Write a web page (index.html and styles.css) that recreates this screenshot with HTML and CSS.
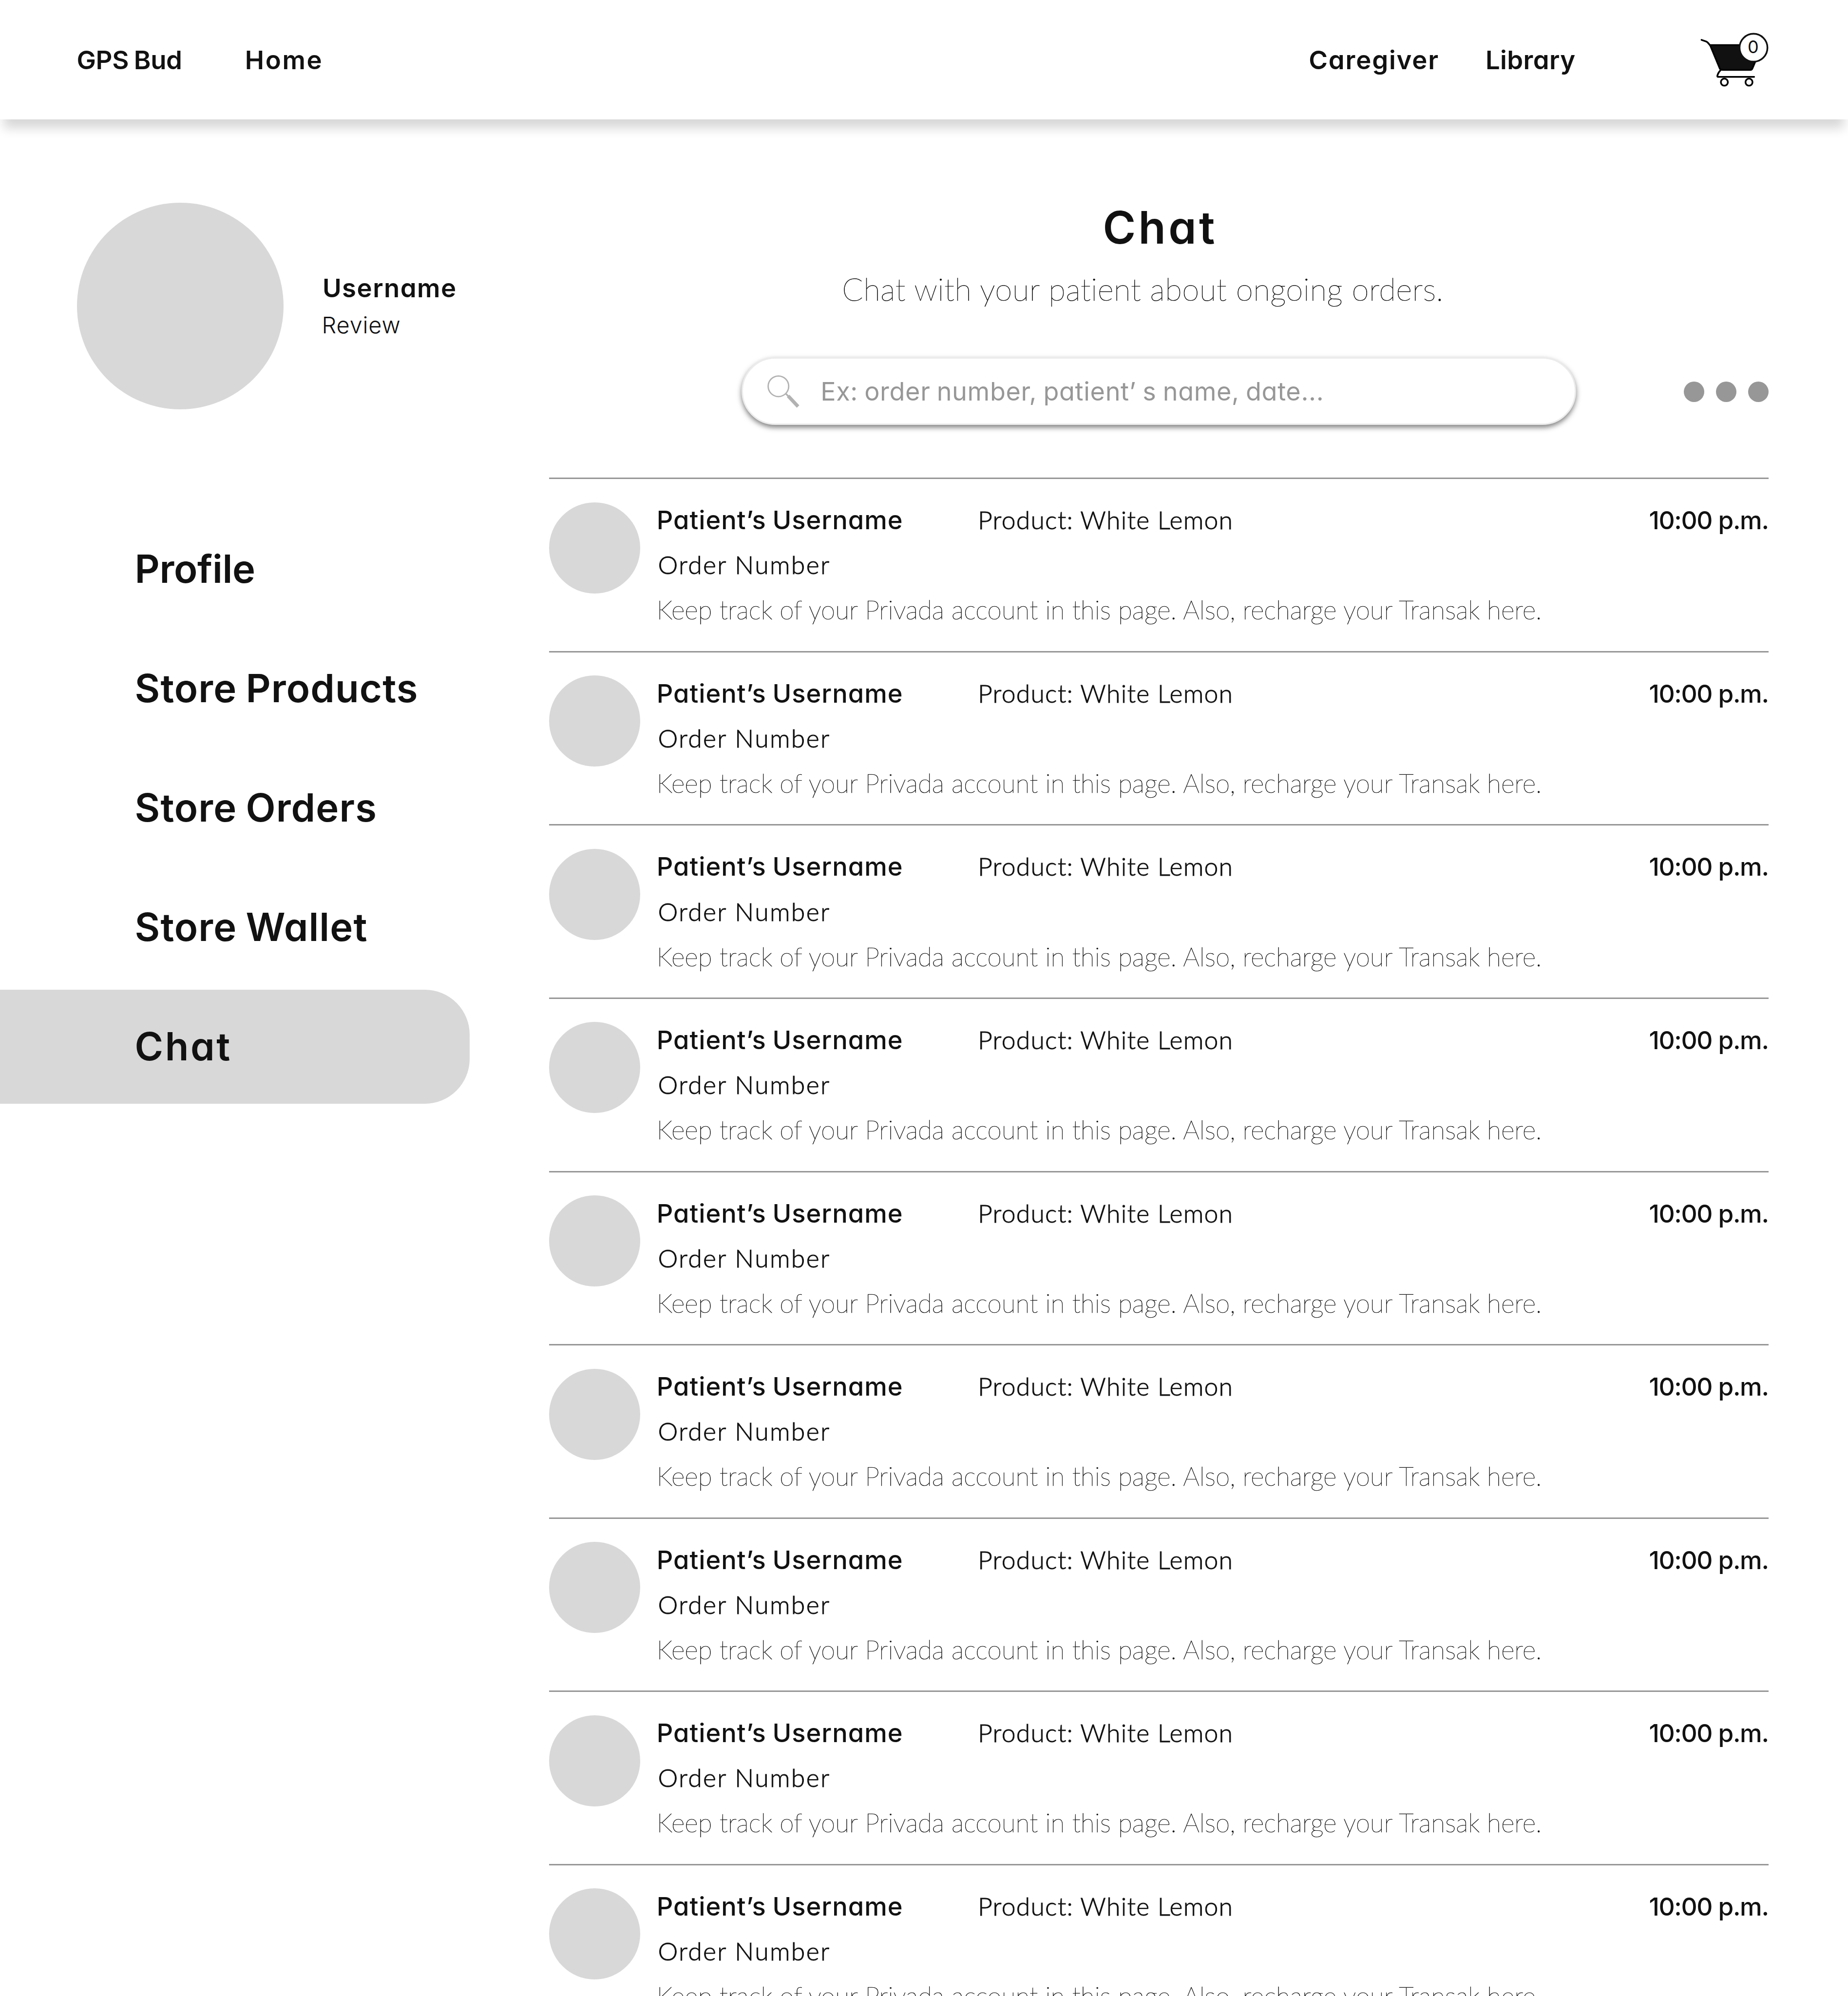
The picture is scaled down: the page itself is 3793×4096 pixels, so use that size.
FILE: index.html
```html
<!DOCTYPE html>
<html lang="en">
<head>
<meta charset="utf-8">
<title>GPS Bud – Chat</title>
<link rel="stylesheet" href="styles.css">
</head>
<body>
<header class="topbar">
  <a class="topbar-link brand">GPS Bud</a>
  <a class="topbar-link home">Home</a>
  <a class="topbar-link caregiver">Caregiver</a>
  <a class="topbar-link library">Library</a>
  <svg class="cart" viewBox="0 0 240 180" aria-label="Cart">
    <g fill="none" stroke="#000" stroke-width="4" stroke-linecap="round" stroke-linejoin="round">
      <path fill="#111" d="M58 56.5H180L156.8 111.5Q155.6 114.4 152.4 114.4H88Q82.5 114.4 80.8 111.5Z"/>
      <path d="M38 44.2L49.5 48.3Q52 49.4 58 57"/>
      <path d="M82.8 114.8Q76.4 121.5 75 128.2Q74.6 130.6 76.8 130.6H161"/>
      <circle cx="91.4" cy="143" r="8.2"/>
      <circle cx="149" cy="143" r="8.2"/>
    </g>
    <circle cx="159.5" cy="62.6" r="32.6" fill="#fff" stroke="#111" stroke-width="4"/>
    <text class="cart-count" x="158.7" y="75" text-anchor="middle">0</text>
  </svg>
</header>
<div class="page">
  <aside class="sidebar">
    <section class="user">
      <div class="user-avatar"></div>
      <div class="user-text">
        <div class="user-name">Username</div>
        <div class="user-review">Review</div>
      </div>
    </section>
    <nav class="menu">
      <a class="menu-item tight">Profile</a>
      <a class="menu-item">Store Products</a>
      <a class="menu-item">Store Orders</a>
      <a class="menu-item">Store Wallet</a>
      <a class="menu-item active">Chat</a>
    </nav>
  </aside>
  <main class="main">
    <h1 class="title">Chat</h1>
    <p class="subtitle">Chat with your patient about ongoing orders.</p>
    <div class="tools">
      <div class="search">
        <svg class="search-icon" viewBox="0 0 80 80" fill="none" stroke="#b2b2b2">
          <circle cx="29.3" cy="29.3" r="24" stroke-width="3.2"/>
          <path stroke-width="4" d="M46.3 46.3L53 53"/>
          <path stroke-width="8" d="M52 51.8L75.2 76.6"/>
        </svg>
        <span class="search-hint">Ex: order number, patient’ s name, date...</span>
      </div>
      <div class="dots"><i></i><i></i><i></i></div>
    </div>
    <div class="list">
      <article class="chat"><div class="chat-avatar"></div><div class="chat-body"><div class="chat-head"><span class="chat-name">Patient’s Username</span><span class="chat-product">Product: White Lemon</span><span class="chat-time">10:00 p.m.</span></div><div class="chat-order">Order Number</div><div class="chat-text">Keep track of your Privada account in this page. Also, recharge your Transak here.</div></div></article>
      <article class="chat"><div class="chat-avatar"></div><div class="chat-body"><div class="chat-head"><span class="chat-name">Patient’s Username</span><span class="chat-product">Product: White Lemon</span><span class="chat-time">10:00 p.m.</span></div><div class="chat-order">Order Number</div><div class="chat-text">Keep track of your Privada account in this page. Also, recharge your Transak here.</div></div></article>
      <article class="chat"><div class="chat-avatar"></div><div class="chat-body"><div class="chat-head"><span class="chat-name">Patient’s Username</span><span class="chat-product">Product: White Lemon</span><span class="chat-time">10:00 p.m.</span></div><div class="chat-order">Order Number</div><div class="chat-text">Keep track of your Privada account in this page. Also, recharge your Transak here.</div></div></article>
      <article class="chat"><div class="chat-avatar"></div><div class="chat-body"><div class="chat-head"><span class="chat-name">Patient’s Username</span><span class="chat-product">Product: White Lemon</span><span class="chat-time">10:00 p.m.</span></div><div class="chat-order">Order Number</div><div class="chat-text">Keep track of your Privada account in this page. Also, recharge your Transak here.</div></div></article>
      <article class="chat"><div class="chat-avatar"></div><div class="chat-body"><div class="chat-head"><span class="chat-name">Patient’s Username</span><span class="chat-product">Product: White Lemon</span><span class="chat-time">10:00 p.m.</span></div><div class="chat-order">Order Number</div><div class="chat-text">Keep track of your Privada account in this page. Also, recharge your Transak here.</div></div></article>
      <article class="chat"><div class="chat-avatar"></div><div class="chat-body"><div class="chat-head"><span class="chat-name">Patient’s Username</span><span class="chat-product">Product: White Lemon</span><span class="chat-time">10:00 p.m.</span></div><div class="chat-order">Order Number</div><div class="chat-text">Keep track of your Privada account in this page. Also, recharge your Transak here.</div></div></article>
      <article class="chat"><div class="chat-avatar"></div><div class="chat-body"><div class="chat-head"><span class="chat-name">Patient’s Username</span><span class="chat-product">Product: White Lemon</span><span class="chat-time">10:00 p.m.</span></div><div class="chat-order">Order Number</div><div class="chat-text">Keep track of your Privada account in this page. Also, recharge your Transak here.</div></div></article>
      <article class="chat"><div class="chat-avatar"></div><div class="chat-body"><div class="chat-head"><span class="chat-name">Patient’s Username</span><span class="chat-product">Product: White Lemon</span><span class="chat-time">10:00 p.m.</span></div><div class="chat-order">Order Number</div><div class="chat-text">Keep track of your Privada account in this page. Also, recharge your Transak here.</div></div></article>
      <article class="chat"><div class="chat-avatar"></div><div class="chat-body"><div class="chat-head"><span class="chat-name">Patient’s Username</span><span class="chat-product">Product: White Lemon</span><span class="chat-time">10:00 p.m.</span></div><div class="chat-order">Order Number</div><div class="chat-text">Keep track of your Privada account in this page. Also, recharge your Transak here.</div></div></article>
    </div>
  </main>
</div>
</body>
</html>
```
FILE: styles.css
```css
/* 1rem = 10 units of the 1440-wide layout */
html {
  font-size: 26.34px;
}

* {
  box-sizing: border-box;
  margin: 0;
}

body {
  height: 4096px;
  overflow: hidden;
  background: #fff;
  color: #111;
  font-family: Inter, "Liberation Sans", sans-serif;
  font-feature-settings: "cv11";
  white-space: nowrap;
}

/* Top bar */
.topbar {
  position: relative;
  display: flex;
  align-items: center;
  height: 9.3rem;
  padding: 0 4.67rem 0 5.98rem;
  background: #fff;
  box-shadow: 0 1rem 0.8rem -0.3rem rgba(0, 0, 0, 0.16);
}

.topbar-link {
  flex: none;
  padding-top: 0.05rem;
  font-size: 2rem;
  font-weight: 600;
  line-height: 3rem;
  word-spacing: -0.04em;
}

.brand {
  width: 13.11rem;
  letter-spacing: -0.007em;
}

.home {
  letter-spacing: 0.05em;
}

.caregiver {
  width: 13.77rem;
  margin-left: auto;
  letter-spacing: 0.035em;
}

.library {
  width: 15.58rem;
  letter-spacing: 0.008em;
}

.cart {
  flex: none;
  width: 8rem;
  height: 6rem;
}

.cart-count {
  fill: #111;
  font-size: 41px;
  font-weight: 400;
}

.page {
  display: grid;
  grid-template-columns: 42.8rem 95rem;
}

/* Sidebar */
.sidebar {
  padding-top: 6.5rem;
}

.user {
  display: flex;
  align-items: center;
  gap: 3.03rem;
  padding-left: 6rem;
}

.user-avatar {
  width: 16.1rem;
  height: 16.1rem;
  border-radius: 50%;
  background: #d8d8d8;
}

.user-text {
  padding-top: 0.13rem;
  line-height: 2.87rem;
}

.user-name {
  font-size: 2rem;
  font-weight: 600;
  letter-spacing: 0.028em;
}

.user-review {
  margin-left: -0.05rem;
  font-size: 1.78rem;
  font-weight: 300;
  letter-spacing: 0.018em;
}

.menu {
  display: flex;
  flex-direction: column;
  gap: 0.4rem;
  margin-top: 8rem;
}

.menu-item {
  width: 36.6rem;
  height: 8.9rem;
  padding-left: 10.5rem;
  border-radius: 0 3.5rem 3.5rem 0;
  font-size: 3.02rem;
  font-weight: 600;
  line-height: 8.85rem;
  letter-spacing: 0.014em;
  word-spacing: -0.04em;
}

.menu-item.tight {
  letter-spacing: -0.0045em;
}

.menu-item.active {
  background: #d8d8d8;
  letter-spacing: 0.045em;
}

/* Main column */
.main {
  padding-top: 5.93rem;
}

.title {
  padding-left: 0.2rem;
  font-size: 3.49rem;
  font-weight: 600;
  line-height: 5rem;
  letter-spacing: 0.058em;
  text-align: center;
}

.subtitle {
  margin-top: 0.76rem;
  padding-right: 2.5rem;
  font-family: Lato, "Liberation Sans", sans-serif;
  font-size: 2.42rem;
  font-weight: 100;
  line-height: 3rem;
  letter-spacing: 0.0066em;
  text-align: center;
  -webkit-text-stroke: 0.7px #111;
}

.tools {
  display: flex;
  align-items: center;
  justify-content: space-between;
  margin-top: 3.83rem;
  padding-left: 15rem;
}

.search {
  display: flex;
  align-items: center;
  gap: 1.59rem;
  width: 65rem;
  height: 5.3rem;
  padding-left: 1.77rem;
  border: 3px solid #ececec;
  border-radius: 2.65rem;
  background: #fff;
  box-shadow: 0 0.2rem 0.4rem rgba(0, 0, 0, 0.5);
}

.search-icon {
  width: 2.667rem;
  height: 2.667rem;
}

.search-hint {
  color: #979797;
  font-size: 1.98rem;
  letter-spacing: 0.0125em;
  word-spacing: -0.04em;
}

.dots {
  display: flex;
  gap: 0.9rem;
  padding-top: 0.08rem;
}

.dots i {
  width: 1.6rem;
  height: 1.6rem;
  border-radius: 50%;
  background: #979797;
}

/* Conversations */
.list {
  margin-top: 4.1rem;
}

.chat {
  display: flex;
  gap: 1.27rem;
  height: 13.5rem;
  border-top: 3px solid #979797;
}

.chat-avatar {
  flex: none;
  width: 7.1rem;
  height: 7.1rem;
  margin-top: 1.8rem;
  border-radius: 50%;
  background: #d8d8d8;
}

.chat-body {
  flex: 1;
  padding-top: 1.4rem;
  line-height: 3.5rem;
}

.chat-head {
  display: flex;
  align-items: baseline;
  height: 3.5rem;
}

.chat-name {
  width: 25.03rem;
  font-size: 1.99rem;
  font-weight: 500;
  letter-spacing: 0.019em;
  word-spacing: -0.04em;
}

.chat-product,
.chat-order {
  font-family: Lato, "Liberation Sans", sans-serif;
  font-size: 1.96rem;
  font-weight: 300;
  letter-spacing: 0.0245em;
  -webkit-text-stroke: 0.9px #111;
}

.chat-order {
  margin-left: 0.1rem;
  letter-spacing: 0.046em;
}

.chat-time {
  margin-left: auto;
  font-size: 1.95rem;
  font-weight: 500;
  letter-spacing: -0.026em;
}

.chat-text {
  padding-top: 0.03rem;
  font-family: Lato, "Liberation Sans", sans-serif;
  font-size: 2.015rem;
  font-weight: 100;
  letter-spacing: -0.0004em;
  -webkit-text-stroke: 0.6px #111;
}
```
